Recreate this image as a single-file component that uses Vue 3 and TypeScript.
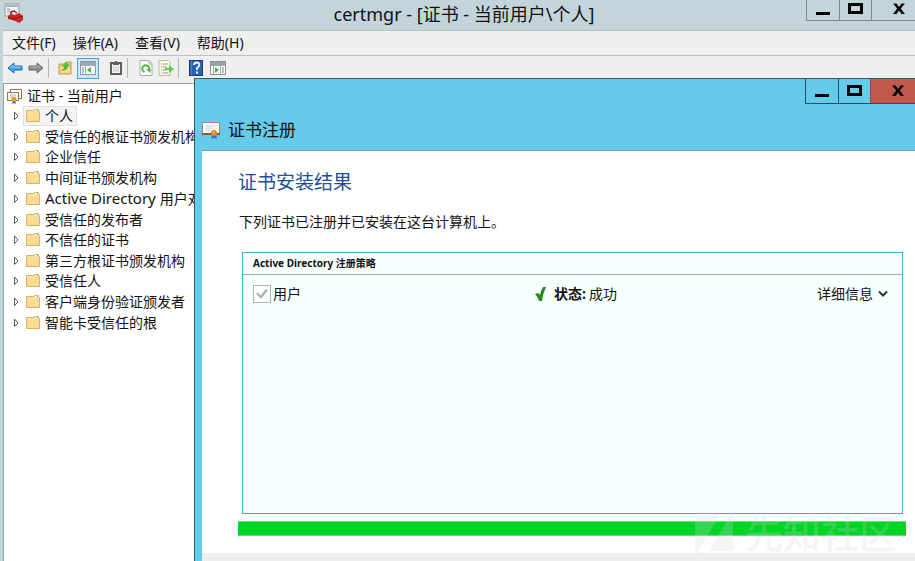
<script setup lang="ts">
import { ref } from 'vue'

interface Store {
  name: string
  latin?: string
}

const menus: string[] = ['文件(F)', '操作(A)', '查看(V)', '帮助(H)']

const stores: Store[] = [
  { name: '个人' },
  { name: '受信任的根证书颁发机构' },
  { name: '企业信任' },
  { name: '中间证书颁发机构' },
  { latin: 'Active Directory ', name: '用户对象' },
  { name: '受信任的发布者' },
  { name: '不信任的证书' },
  { name: '第三方根证书颁发机构' },
  { name: '受信任人' },
  { name: '客户端身份验证颁发者' },
  { name: '智能卡受信任的根' },
]

const selected = ref<string>('个人')
</script>

<template>
  <div class="window">
    <header class="titlebar">
      <svg class="app-icon" width="20" height="20" viewBox="0 0 20 20" aria-hidden="true">
        <rect x="1" y="1" width="14" height="12" fill="#f4f6f7" stroke="#8b989e" />
        <path d="M2 3h12" stroke="#a9b6bd" stroke-width="2" />
        <path d="M3 6h3M3 8h3M3 10h2" stroke="#7f99ad" />
        <path d="M7 11V9l3-1 3 2" fill="none" stroke="#5b3027" stroke-width="1.5" />
        <path d="M4 13l3-3 3 2 5-2 4 3v4l-4 3-4-2-3-1-4-1z" fill="#c62a25" />
        <path d="M4 14l6 2 9-3M10 14v3" fill="none" stroke="#8d1713" />
      </svg>
      <h1>certmgr - [证书 - 当前用户\个人]</h1>
      <div class="controls">
        <button type="button" class="min" aria-label="最小化"><svg width="14" height="12" viewBox="0 0 14 12"><path d="M0 10.5h14" stroke="#000" stroke-width="3" /></svg></button>
        <button type="button" class="max" aria-label="最大化"><svg width="15" height="12" viewBox="0 0 15 12"><rect x="1.5" y="1.5" width="12" height="8" fill="none" stroke="#000" stroke-width="3" /></svg></button>
        <button type="button" class="close" aria-label="关闭"><svg width="12" height="12" viewBox="0 0 12 12"><path d="M0 .5h3.500L6 4 8.500.5H12L7.800 5.500 12 11H8.500L6 7.500 3.500 11H0l4.200-5.500z" fill="#000" /></svg></button>
      </div>
    </header>

    <nav class="menubar">
      <button v-for="m in menus" :key="m" type="button">{{ m }}</button>
    </nav>

    <div class="toolbar">
      <button type="button" aria-label="后退">
        <svg width="16" height="16" viewBox="0 0 16 16"><path d="M1 8l6-5v3h8v4H7v3z" fill="#45a8ea" stroke="#1763a8" stroke-linejoin="round" /><path d="M3 8l3-2.500V7h8" fill="none" stroke="#8fd0fa" /></svg>
      </button>
      <button type="button" class="forward" aria-label="前进">
        <svg width="16" height="16" viewBox="0 0 16 16"><path d="M15 8L9 3v3H1v4h8v3z" fill="#8c8e90" stroke="#626567" stroke-linejoin="round" /><path d="M2 7h8V5.500L12.500 8" fill="none" stroke="#b4b6b8" /></svg>
      </button>
      <span class="sep"></span>
      <button type="button" aria-label="上移一级">
        <svg width="16" height="16" viewBox="0 0 16 16"><path d="M2 4h6l1-2h5v12H2z" fill="#efc76a" stroke="#c4974a" /><path d="M3 7h10v6H3z" fill="#f9dc8f" /><path d="M3 11q4-1 4-5H5l4-4 4 4h-2q0 5-8 5z" fill="#52bd3f" /></svg>
      </button>
      <button type="button" class="active" aria-label="显示/隐藏控制台树">
        <svg width="16" height="14" viewBox="0 0 16 14"><rect x=".5" y=".5" width="15" height="13" fill="#fff" stroke="#8e9ba5" /><path d="M1 2.500h14" stroke="#9aa9b4" stroke-width="3" /><path d="M5.500 4v9M1 4.500h14" stroke="#a1adb6" /><path d="M2 7h2M2 9h2M2 11h2" stroke="#597fa5" /><path d="M11 6v6L7 9z" fill="#43b82d" /></svg>
      </button>
      <button type="button" class="paste" aria-label="粘贴">
        <svg width="14" height="16" viewBox="0 0 14 16"><path d="M2 3h10v11H2z" fill="#f5f5f5" stroke="#5e5e5e" stroke-width="2" /><path d="M4 2h2V1h2v1h2v3H4z" fill="#5e5e5e" /><path d="M4 7h6M4 9h6M4 11h6" stroke="#c8c8c8" /></svg>
      </button>
      <span class="sep"></span>
      <button type="button" class="refresh" aria-label="刷新">
        <svg width="16" height="16" viewBox="0 0 16 16"><path d="M2 .5h9l3 3v12H2z" fill="#fff" stroke="#a6aaa6" /><path d="M11 1v3h3" fill="none" stroke="#a6aaa6" /><path d="M6.500 12A3.500 3.500 0 1 1 11 10" fill="none" stroke="#4ebc3c" stroke-width="2" /><path d="M8 9h5l-1 4z" fill="#4ebc3c" /></svg>
      </button>
      <button type="button" aria-label="导出列表">
        <svg width="16" height="16" viewBox="0 0 16 16"><path d="M1 .5h9l2 2v13H1z" fill="#fffbe8" stroke="#c0b796" /><path d="M3 4h1m1 0h5M3 7h1m1 0h4M3 10h1m1 0h4M3 13h1m1 0h5" stroke="#8d9198" /><path d="M7 8h4V5l5 4-5 4v-3H7z" fill="#64cc4d" /></svg>
      </button>
      <span class="sep"></span>
      <button type="button" class="help" aria-label="帮助">
        <svg width="14" height="16" viewBox="0 0 14 16"><rect x=".5" y=".5" width="13" height="15" fill="#2563b7" stroke="#1a3e7d" /><path d="M2.500 1v14" stroke="#4c80c8" /><path d="M5 5q0-2.500 2.700-2.500T10.300 5Q10.300 6.500 8 8v2" fill="none" stroke="#fff" stroke-width="1.800" /><path d="M7 11.500h2v2H7z" fill="#fff" /></svg>
      </button>
      <button type="button" class="pane" aria-label="显示/隐藏操作窗格">
        <svg width="16" height="14" viewBox="0 0 16 14"><rect x=".5" y=".5" width="15" height="13" fill="#fff" stroke="#899197" /><path d="M1 2.500h14" stroke="#99a2a9" stroke-width="3" /><path d="M10.500 4v9M3.500 4v9M1 4.500h14" stroke="#9aa3aa" /><path d="M12 7h2M12 9h2M12 11h2" stroke="#597fa5" /><path d="M5 6v6l4-3z" fill="#43b82d" /></svg>
      </button>
    </div>

    <aside class="tree">
      <div class="root">
        <svg width="15" height="15" viewBox="0 0 15 15" aria-hidden="true"><rect x="3.500" y=".5" width="11" height="9" fill="#fff" stroke="#94764e" /><rect x=".5" y="3.500" width="11" height="8" fill="#fffdf5" stroke="#94764e" /><path d="M3 6h6M3 8h3" stroke="#9db9d5" /><path d="M6 11l-1 4 2-1 2 1-1-4z" fill="#2a72bd" /><circle cx="7" cy="10" r="2.500" fill="#e89a22" /></svg>
        <span>证书 - 当前用户</span>
      </div>
      <ul>
        <li v-for="s in stores" :key="s.name">
          <svg class="arrow" width="6" height="10" viewBox="0 0 6 10" aria-hidden="true"><path d="M1.500 1v7.500L5 5z" fill="#fff" stroke="#5a5a5a" /></svg>
          <button type="button" :class="{ selected: s.name === selected }" @click="selected = s.name">
            <svg width="14" height="14" viewBox="0 0 14 14" aria-hidden="true"><path d="M.5 1.500h7l1-1h4v2h1v10H.5z" fill="#edc777" stroke="#d9b265" /><path d="M1 3h12v9H1z" fill="#f9dc91" /><path d="M1 3h7l1-1h4" fill="none" stroke="#fff0bd" /><path d="M9 1.500h3" stroke="#fff" /><path d="M11 1.500h1" stroke="#4d99cf" /></svg>
            <span><span v-if="s.latin" class="latin">{{ s.latin }}</span>{{ s.name }}</span>
          </button>
        </li>
      </ul>
    </aside>

    <section class="dialog" role="dialog" aria-labelledby="dialog-title">
      <div class="controls">
        <button type="button" class="min" aria-label="最小化"><svg width="14" height="12" viewBox="0 0 14 12"><path d="M0 10.500h14" stroke="#000" stroke-width="3" /></svg></button>
        <button type="button" class="max" aria-label="最大化"><svg width="15" height="12" viewBox="0 0 15 12"><rect x="1.500" y="1.500" width="12" height="8" fill="none" stroke="#000" stroke-width="3" /></svg></button>
        <button type="button" class="close" aria-label="关闭"><svg width="12" height="12" viewBox="0 0 12 12"><path d="M0 .5h3.500L6 4 8.500.5H12L7.800 5.500 12 11H8.500L6 7.500 3.500 11H0l4.200-5.500z" fill="#000" /></svg></button>
      </div>
      <div class="caption">
        <svg width="18" height="17" viewBox="0 0 18 17" aria-hidden="true"><rect x=".5" y=".5" width="17" height="11" fill="#fff" stroke="#a98563" /><path d="M0 12h18" stroke="#8e5a39" stroke-width="2" /><path d="M3 4h12M4 6h8M3 8h5" stroke="#c3d2e2" /><path d="M10 12l-1 5 3-1 3 1-1-5z" fill="#3478bf" /><circle cx="12" cy="11" r="3" fill="#d58a20" /><circle cx="12" cy="11" r="1" fill="#f5be57" /></svg>
        <h2 id="dialog-title">证书注册</h2>
      </div>
      <div class="page">
        <div class="content">
          <h3>证书安装结果</h3>
          <p>下列证书已注册并已安装在这台计算机上。</p>
          <div class="policy">
            <h4>Active Directory 注册策略</h4>
            <div class="row">
              <label><input type="checkbox" checked disabled />用户</label>
              <div class="status">
                <svg width="12" height="14" viewBox="0 0 12 14" aria-hidden="true"><path d="M0 7l3-1 2 2q1-5 3-8h3Q8 6 7 14H4Q3 10 0 7z" fill="#2c8a1c" /></svg>
                <strong>状态:</strong><span>成功</span>
              </div>
              <button type="button" class="details">详细信息
                <svg width="10" height="8" viewBox="0 0 10 8" aria-hidden="true"><path d="M1 1.500l4 4 4-4" fill="none" stroke="#333" stroke-width="2" /></svg>
              </button>
            </div>
          </div>
          <div class="progress" role="progressbar" aria-valuenow="100" aria-label="安装进度"></div>
        </div>
        <footer></footer>
      </div>
    </section>

    <div class="watermark" aria-hidden="true">
      <svg width="40" height="44" viewBox="0 0 40 44"><path d="M0 6h24L5 36 1 44 0 40zM38 0v40H14z" fill="#d8d8d8" /></svg>
      <span>先知社区</span>
    </div>
  </div>
</template>

<style>
body {
  margin: 0;
}
</style>

<style scoped>
* {
  box-sizing: border-box;
}

.window {
  position: relative;
  display: flex;
  flex-direction: column;
  min-height: 100vh;
  padding-left: 3px;
  overflow: hidden;
  background: #c3d5db;
  color: #111;
  font: 14px/20px "Noto Sans", "Noto Sans CJK SC", sans-serif;
}

h1, h2, h3, h4, p, ul {
  margin: 0;
  padding: 0;
  font-weight: 400;
}

button {
  display: flex;
  align-items: center;
  padding: 0;
  border: 0;
  background: none;
  color: inherit;
  font: inherit;
  white-space: nowrap;
}

svg {
  display: block;
  flex: none;
}

.titlebar {
  display: grid;
  grid-template-columns: 1fr auto 1fr;
  align-items: start;
  height: 30px;
}

.app-icon {
  margin: 3px 0 0 1px;
}

.titlebar h1 {
  padding-left: 10px;
  font-size: 18px;
  line-height: 28px;
}

.controls {
  display: flex;
  justify-self: end;
  border: 1px solid #7d898d;
  border-width: 0 0 1px 1px;
}

.controls button {
  justify-content: center;
  width: 33px;
  height: 20px;
  padding-bottom: 3px;
  border-right: 1px solid #7d898d;
}

.controls .max {
  width: 32px;
}

.controls .close {
  width: 43px;
  padding-left: 10px;
  border-right: 0;
}

.menubar {
  display: flex;
  gap: 17px;
  height: 26px;
  padding: 0 9px;
  border-top: 1px solid #b8c0c4;
  border-bottom: 1px solid #bcbfc4;
  background: #efefef;
}

.toolbar {
  display: flex;
  align-items: center;
  gap: 4px;
  height: 27px;
  padding: 0 4px 3px;
  background: #efefef;
}

.toolbar .forward {
  margin-left: 1px;
}

.toolbar .sep {
  width: 1px;
  height: 20px;
  margin-right: 4px;
  background: #b4b4b4;
}

.toolbar .active {
  justify-content: center;
  width: 22px;
  height: 21px;
  border: 1px solid #4aa3df;
  background: #cfe6f7;
}

.toolbar .paste {
  margin-left: 6px;
}

.toolbar .refresh,
.toolbar .help {
  margin-left: 2px;
}

.toolbar .pane {
  margin-left: 3px;
}

.tree {
  flex: 1;
  padding: 2px 3px;
  border: 1px solid #9a9fa3;
  border-width: 1px 0 0 1px;
  background: #fff;
}

.root {
  display: flex;
  align-items: center;
  gap: 5px;
  height: 20px;
}

.tree ul {
  display: grid;
  grid-auto-rows: 1fr;
  height: 227px;
}

.tree li {
  display: flex;
  align-items: center;
  gap: 4px;
  padding-left: 6px;
  list-style: none;
}

.tree li button {
  gap: 5px;
  padding: 0 3px 0 2px;
  border: 1px solid transparent;
  line-height: 18px;
}

.tree .latin {
  font-size: 15px;
}

.tree li .selected {
  border-color: #dedede;
  background: #f3f3f3;
}

.dialog {
  position: absolute;
  inset: 78px 0 0 194px;
  display: flex;
  flex-direction: column;
  padding-left: 7px;
  border: 1px solid #3c555f;
  border-width: 1px 0 0 1px;
  background: #66caea;
}

.dialog .controls {
  align-self: flex-end;
  border-color: #24505f;
}

.dialog .controls button {
  height: 24px;
  padding-bottom: 0;
  border-color: #24505f;
}

.dialog .controls .max {
  border-color: #8c4b3b;
}

.dialog .controls .close {
  width: 44px;
  background: #c1584e;
}

.caption {
  display: flex;
  align-items: center;
  gap: 8px;
  height: 46px;
  padding-top: 6px;
}

.caption h2 {
  font-size: 17px;
}

.page {
  display: flex;
  flex: 1;
  flex-direction: column;
  border-top: 1px solid #8199b6;
  background: #fff;
}

.content {
  display: flex;
  flex: 1;
  flex-direction: column;
  padding: 18px 9px 17px 36px;
}

.content h3 {
  color: #1c4f9c;
  font-size: 19px;
  line-height: 26px;
}

.content p {
  padding: 17px 0 20px 1px;
}

.policy {
  flex: 1;
  margin: 0 3px 7px 4px;
  border: 1px solid #45acd0;
  background: #f7ffff;
}

.policy h4 {
  padding: 0 10px;
  border-bottom: 1px solid #a3abac;
  font-size: 10px;
  font-weight: 700;
  line-height: 21px;
}

.row {
  display: grid;
  grid-template-columns: 282px 1fr auto;
  align-items: center;
  padding: 9px 14px 0 10px;
}

.row label {
  display: flex;
  align-items: center;
  gap: 2px;
}

.row input {
  appearance: none;
  width: 18px;
  height: 18px;
  margin: 0;
  border: 1px solid #aab0b4;
  background: #fff;
}

.row input:checked::before {
  display: block;
  width: 12px;
  height: 10px;
  margin: 3px 2px;
  background: #adb1b3;
  clip-path: polygon(0 45%, 18% 35%, 38% 65%, 82% 0, 100% 12%, 42% 100%);
  content: "";
}

.status {
  display: flex;
  align-items: center;
  gap: 3px;
}

.status strong {
  margin-left: 4px;
}

.details {
  gap: 5px;
}

.progress {
  height: 15px;
  border: 1px solid #62dc7b;
  border-width: 1px 0;
  background: #00d526;
}

.page footer {
  height: 8px;
  background: #eee;
}

.watermark {
  position: absolute;
  right: 18px;
  bottom: 4px;
  display: flex;
  align-items: center;
  gap: 10px;
  opacity: 0.24;
  color: #d4d4d4;
  font-size: 38px;
  font-weight: 500;
  line-height: 48px;
  pointer-events: none;
}
</style>
